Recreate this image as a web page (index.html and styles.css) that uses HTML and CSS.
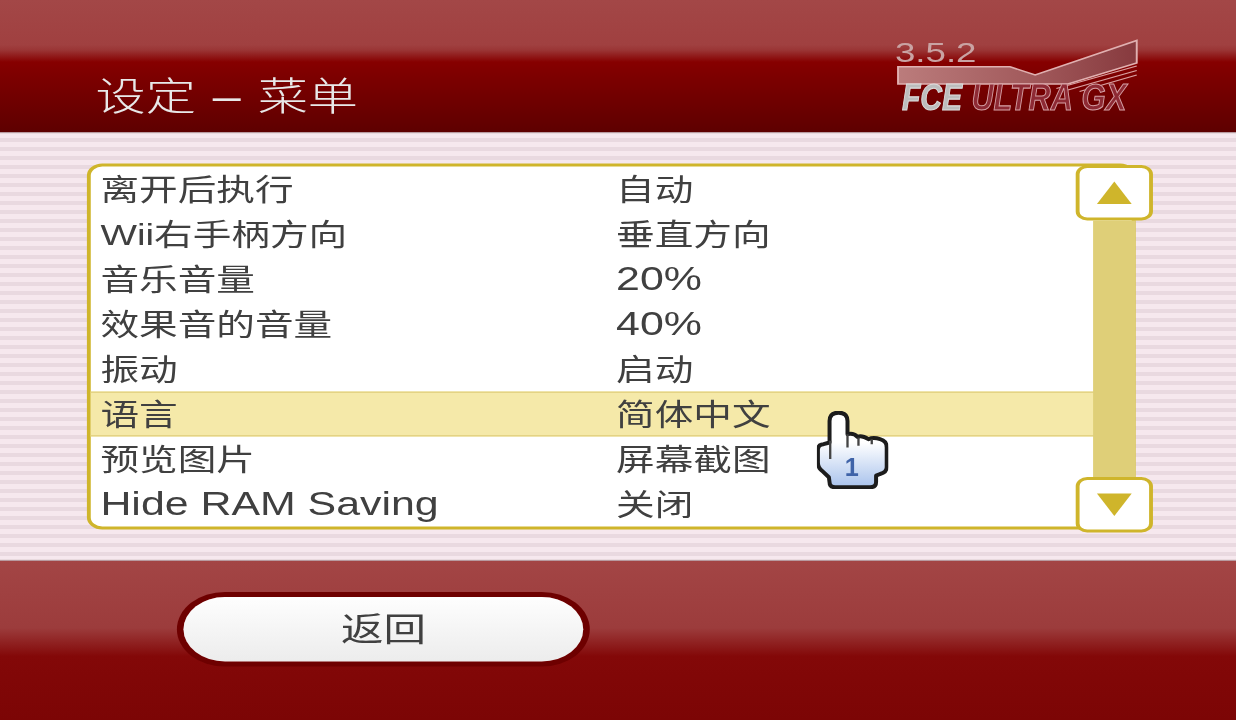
FILE: index.html
```html
<!DOCTYPE html>
<html lang="zh-CN">
<head>
    <meta charset="UTF-8">
    <title>设定 - 菜单</title>
    <link rel="stylesheet" href="styles.css">
</head>
<body>
<div class="stage">
<div class="screen">
    <div class="top">
        <h1 class="title">设定 – 菜单</h1>
        <svg class="logo" width="127" height="60" viewBox="0 -4 127 60">
            <defs>
                <linearGradient id="band" x1="0" y1="0" x2="1" y2="0">
                    <stop offset="0" stop-color="#bb7c7c"/>
                    <stop offset="0.55" stop-color="#a25a5c"/>
                    <stop offset="1" stop-color="#873a3e"/>
                </linearGradient>
            </defs>
            <polygon class="logo-back" points="2,19.5 60,19.5 73,25 125.6,2 125.6,17 90,31 2,31"/>
            <polyline class="logo-line" points="84,34 125.6,19"/>
            <polyline class="logo-line" points="90,35 125.6,22"/>
            <polyline class="logo-line" points="96,36 125.6,25"/>
            <text class="logo-ver" x="0.4" y="16">3.5.2</text>
            <text class="logo-fce" transform="translate(4 48) scale(0.65 1)">FCE</text>
            <text class="logo-ultra" transform="translate(40 48) scale(0.66 1)">ULTRA</text>
            <text class="logo-ultra" transform="translate(97 48) scale(0.67 1)">GX</text>
        </svg>
    </div>

    <div class="middle">
        <div class="list">
            <div class="row"><span>离开后执行</span><span>自动</span></div>
            <div class="row"><span>Wii右手柄方向</span><span>垂直方向</span></div>
            <div class="row"><span>音乐音量</span><span class="latin">20%</span></div>
            <div class="row"><span>效果音的音量</span><span class="latin">40%</span></div>
            <div class="row"><span>振动</span><span>启动</span></div>
            <div class="row selected"><span>语言</span><span>简体中文</span></div>
            <div class="row"><span>预览图片</span><span>屏幕截图</span></div>
            <div class="row"><span class="latin">Hide RAM Saving</span><span>关闭</span></div>
        </div>
        <div class="scrollbar">
            <div class="arrow-btn"><div class="arrow-up"></div></div>
            <div class="track"></div>
            <div class="arrow-btn"><div class="arrow-down"></div></div>
        </div>
    </div>

    <div class="bottom">
        <div class="back-btn">返回</div>
    </div>

    <svg class="cursor" width="37" height="51.5" viewBox="0 0 215 233" preserveAspectRatio="none">
        <defs>
            <linearGradient id="hand" x1="0" y1="0" x2="0" y2="1">
                <stop offset="0.4" stop-color="#ffffff"/>
                <stop offset="1" stop-color="#a8c2ec"/>
            </linearGradient>
        </defs>
        <path class="hand-shape" d="M38 30 Q38 5 65 5 Q92 5 92 30 L92 70 Q110 65 122 78 Q135 72 155 85 Q170 78 190 85 Q210 90 210 110 L210 170 Q210 185 190 190 L178 195 L178 215 Q178 230 160 230 L55 230 Q38 230 38 215 L36 200 L15 180 Q3 170 3 155 L3 115 Q5 100 20 100 L38 95 Z"/>
        <path class="hand-line" d="M40 90 L40 145 M92 70 L92 110 M125 80 L125 105 M165 85 L165 100"/>
        <text class="hand-num" x="105" y="197">1</text>
    </svg>
</div>
</div>
</body>
</html>
```

FILE: styles.css
```css
body {
    margin: 0;
    padding: 0;
    background: #fff;
}

.stage {
    width: 1236px;
    height: 720px;
    overflow: hidden;
    filter: blur(0.7px);
}

/* the console draws at 640x480, the shot is stretched to 1236x720 */
.screen {
    position: relative;
    display: flex;
    flex-direction: column;
    width: 640px;
    height: 480px;
    transform: scale(1.93125, 1.5);
    transform-origin: 0 0;
    font-family: "Liberation Sans", "Noto Sans CJK SC", sans-serif;
}

.top {
    display: flex;
    justify-content: space-between;
    align-items: flex-start;
    height: 89px;
    padding: 21px 50px 0 49.5px;
    box-sizing: border-box;
    background: linear-gradient(#a34747 0, #a04040 34%, #9a3535 38%, #860000 47%, #7f0000 55%, #5e0000 100%);
    border-bottom: 1px solid #b89aa0;
}

.title {
    margin: 28px 0 0;
    font-size: 26px;
    line-height: 30px;
    font-weight: 300;
    word-spacing: 1.5px;
    color: #e8e8e8;
}

.logo {
    display: block;
}
.logo-back {
    fill: url(#band);
    stroke: #e0b0b0;
    stroke-width: 1;
}
.logo-line {
    fill: none;
    stroke: #d9a0a0;
    stroke-width: 0.8;
}
.logo-ver {
    font-size: 19px;
    fill: #c9a3a3;
}
.logo-fce, .logo-ultra {
    font-size: 24px;
    font-weight: bold;
    font-style: italic;
    stroke-width: 0.7;
}
.logo-fce {
    fill: #bdbdbd;
    stroke: #dcdcdc;
}
.logo-ultra {
    fill: #8e2a34;
    stroke: #d49fa4;
}

.middle {
    position: relative;
    flex: 1;
    padding: 20px 0 0 45px;
    background: repeating-linear-gradient(#f6e8ee 0, #f6e8ee 3px, #e9d9e0 3px, #e9d9e0 6px);
}

.list {
    width: 543px;
    box-sizing: border-box;
    background: #fff;
    border: solid #cfb52b;
    border-width: 2px 2.5px;
    border-radius: 8px;
}

.row {
    display: grid;
    grid-template-columns: 267px 1fr;
    height: 30px;
    padding-left: 5px;
    box-sizing: border-box;
    font-size: 20px;
    line-height: 30px;
    color: #404040;
}

.latin {
    font-size: 22.2px;
}

.selected {
    background: #f5e9a9;
    border-top: 1px solid #e4d384;
    border-bottom: 1px solid #e4d384;
    line-height: 28px;
}

.scrollbar {
    position: absolute;
    left: 557px;
    top: 20.5px;
    width: 39.5px;
    height: 245.5px;
    display: flex;
    flex-direction: column;
    align-items: center;
}

.arrow-btn {
    display: flex;
    justify-content: center;
    align-items: center;
    width: 100%;
    height: 37px;
    box-sizing: border-box;
    background: #fff;
    border: 2.5px solid #cfb52b;
    border-radius: 6px;
}

.track {
    flex: 1;
    width: 22px;
    background: #dfcf78;
}

.arrow-up {
    border-left: 9px solid transparent;
    border-right: 9px solid transparent;
    border-bottom: 15px solid #cfb52b;
}
.arrow-down {
    border-left: 9px solid transparent;
    border-right: 9px solid transparent;
    border-top: 15px solid #cfb52b;
}

.bottom {
    height: 107.5px;
    padding: 24.3px 0 0 94.8px;
    box-sizing: border-box;
    background: linear-gradient(#a34545 0, #9c3c3c 42%, #830808 60%, #7c0505 100%);
    border-top: 1px solid #b89aa0;
}

.back-btn {
    width: 207.6px;
    height: 43.3px;
    line-height: 43.3px;
    text-align: center;
    font-size: 22px;
    color: #404040;
    background: linear-gradient(#fefefe, #ececec);
    border-radius: 22px;
    box-shadow: 0 0 0 3.4px #6e0000;
}

.cursor {
    position: absolute;
    left: 423px;
    top: 274px;
}
.hand-shape {
    fill: url(#hand);
    stroke: #1c1c1c;
    stroke-width: 12;
    stroke-linejoin: round;
}
.hand-line {
    fill: none;
    stroke: #444;
    stroke-width: 7;
}
.hand-num {
    font-size: 76px;
    font-weight: bold;
    text-anchor: middle;
    fill: #3f63a8;
}
```
